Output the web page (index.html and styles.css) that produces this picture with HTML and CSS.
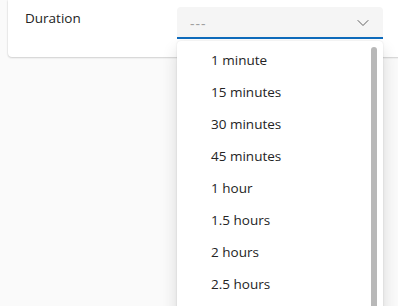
FILE: index.html
```html
<!DOCTYPE html>
<html lang="en">
<head>
    <meta charset="UTF-8">
    <meta name="viewport" content="width=device-width, initial-scale=1.0">
    <title>Duration</title>
    <link rel="stylesheet" href="styles.css">
</head>
<body>
    <div class="card">
        <!-- Label and dropdown side by side -->
        <div class="field">
            <label class="field-label">Duration</label>
            <div class="dropdown">
                <button class="dropdown-button">
                    <span class="placeholder">---</span>
                    <svg class="chevron" width="12" height="12" viewBox="0 0 12 12">
                        <path d="M1 3.5 L6 8.5 L11 3.5" fill="none" stroke="#616161" stroke-width="1" stroke-linecap="round" stroke-linejoin="round"/>
                    </svg>
                </button>

                <!-- Open listbox -->
                <div class="listbox">
                    <ul class="options">
                        <li>1 minute</li>
                        <li>15 minutes</li>
                        <li>30 minutes</li>
                        <li>45 minutes</li>
                        <li>1 hour</li>
                        <li>1.5 hours</li>
                        <li>2 hours</li>
                        <li>2.5 hours</li>
                    </ul>
                    <div class="scroll-thumb"></div>
                </div>
            </div>
        </div>
    </div>
</body>
</html>
```

FILE: styles.css
```css
/* General Reset */
html, body {
    height: 100%;
}

body {
    margin: 0;
    padding: 0;
    background-color: #fafafa;
    color: #242424;
    font-family: "Open Sans", "Noto Sans", sans-serif;
    font-size: 13.5px;
}

.card {
    margin: 0 -30px 0 8px;
    padding: 7px 0 18px 17px;
    background-color: #fff;
    border-radius: 0 0 4px 4px;
    box-shadow: 0 1px 2px rgba(0, 0, 0, 0.14), 0 0 2px rgba(0, 0, 0, 0.12);
}

/* Label on the left, dropdown on the right */
.field {
    display: flex;
    align-items: flex-start;
}

.field-label {
    width: 152px;
    line-height: 20px;
    padding-top: 1px;
}

.dropdown {
    position: relative;
    width: 206px;
}

.dropdown-button {
    display: flex;
    align-items: center;
    justify-content: space-between;
    width: 100%;
    height: 32px;
    padding: 0 14px 0 13px;
    margin: 0;
    border: none;
    border-bottom: 2px solid #0f6cbd;
    border-radius: 4px 4px 0 0;
    background-color: #f5f5f5;
    font-family: inherit;
    font-size: 14px;
    box-sizing: border-box;
}

.placeholder {
    color: #a0a0a0;
    letter-spacing: 1px;
    padding-top: 2px;
}

.chevron {
    margin-top: 2px;
}

/* Listbox overlay */
.listbox {
    position: absolute;
    top: 34px;
    left: 0;
    z-index: 10;
    width: 206px;
    height: 300px;
    display: flex;
    justify-content: space-between;
    background-color: #fff;
    border-radius: 4px;
    box-shadow: 0 8px 16px rgba(0, 0, 0, 0.14), 0 0 2px rgba(0, 0, 0, 0.12);
}

.options {
    list-style: none;
    margin: 0;
    padding: 3px 0 0 34px;
}

.options li {
    height: 32px;
    line-height: 32px;
}

.scroll-thumb {
    width: 6px;
    margin: 6px 6px 0 0;
    border-radius: 3px 3px 0 0;
    background-color: #b8b8b8;
}
```
